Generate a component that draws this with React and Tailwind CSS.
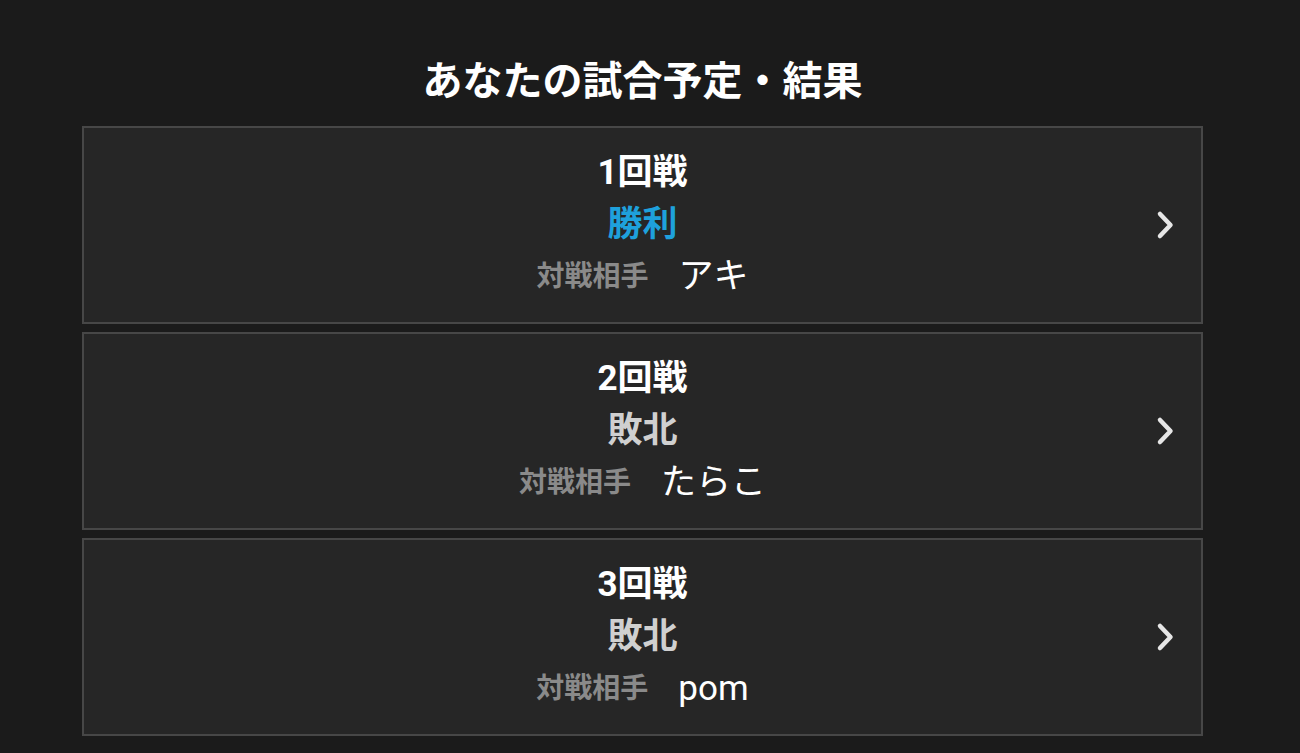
const matches = [
  { round: '1回戦', result: '勝利', win: true, opponent: 'アキ' },
  { round: '2回戦', result: '敗北', win: false, opponent: 'たらこ' },
  { round: '3回戦', result: '敗北', win: false, opponent: 'pom' },
];

function Chevron() {
  return (
    <svg width="22" height="32" viewBox="0 0 22 32" fill="none" className="shrink-0">
      <path d="M6 5 L16.5 16 L6 27" stroke="#e6e6e6" strokeWidth="4.5" strokeLinecap="round" strokeLinejoin="round" />
    </svg>
  );
}

function MatchCard({ m }) {
  return (
    <div className="relative flex items-center h-[198px] border-2 border-[#474747] bg-[#262626]">
      <div className="flex-1 flex flex-col items-center py-[19px]">
        <div className="h-[52px] flex items-center text-[35px] font-bold text-white">{m.round}</div>
        <div
          className={
            'h-[52px] flex items-center text-[35px] font-bold ' +
            (m.win ? 'text-[#1ea1dc]' : 'text-[#d0d0d0]')
          }
        >
          {m.result}
        </div>
        <div className="h-[52px] flex items-center gap-[30px]">
          <span className="text-[28px] font-bold text-[#8a8a8a]">対戦相手</span>
          <span className="text-[35px] text-white">{m.opponent}</span>
        </div>
      </div>
      <div className="absolute right-[25px] top-1/2 -translate-y-1/2">
        <Chevron />
      </div>
    </div>
  );
}

export default function App() {
  return (
    <div
      className="min-h-[753px] bg-[#1b1b1b] pl-[82px] pr-[97px] pb-[17px]"
      style={{ fontFamily: 'Roboto, "Noto Sans CJK JP", sans-serif' }}
    >
      <h1 className="h-[126px] pt-[56px] text-center text-[40px] font-bold text-white leading-[52px]">
        あなたの試合予定・結果
      </h1>
      <div className="flex flex-col gap-[8px]">
        {matches.map((m) => (
          <MatchCard key={m.round} m={m} />
        ))}
      </div>
    </div>
  );
}
